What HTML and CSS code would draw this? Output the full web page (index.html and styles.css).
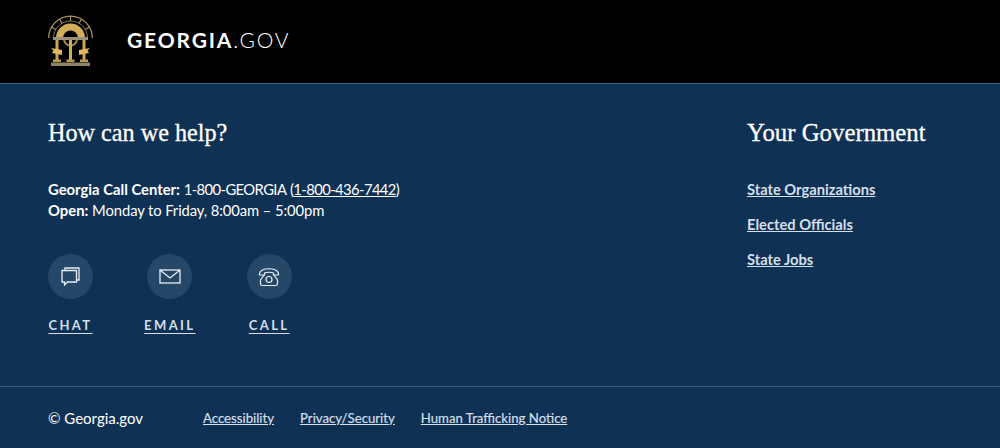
FILE: index.html
```html
<!DOCTYPE html>
<html lang="en">
<head>
<meta charset="UTF-8">
<meta name="viewport" content="width=device-width, initial-scale=1.0">
<title>Georgia.gov</title>
<link rel="stylesheet" href="styles.css">
</head>
<body>

<header class="site-header">
    <svg class="seal" width="45" height="52" viewBox="0 0 45 52" aria-hidden="true">
        <path d="M.7 23a21.800 21.800 0 0 1 43.600 0" fill="none" stroke="#a8935f" stroke-width="1.300"/>
        <path d="M5.500 23a17 17 0 0 1 34 0" fill="none" stroke="#7d6f4a" stroke-width="1"/>
        <path d="M22.500 1v5M11.500 4l2.500 4.500M33.500 4L31 8.500M3.500 12l4.500 2.500M41.500 12L37 14.500" stroke="#a8935f" stroke-width="1.200"/>
        <path d="M8 23a14.500 14.500 0 0 1 29 0h-7a7.500 7.500 0 0 0-15 0z" fill="#d3ae5a"/>
        <path d="M15 24a7.500 7.500 0 0 0 15 0l-2 0a5.500 5.500 0 0 1-11 0z" fill="#a88c48"/>
        <rect x="5" y="22" width="35" height="3" fill="#9a907c"/>
        <rect x="7.500" y="25" width="3" height="20" fill="#c9a552"/>
        <rect x="21" y="25" width="3" height="20" fill="#d3ae5a"/>
        <rect x="34.500" y="25" width="3" height="20" fill="#c9a552"/>
        <path d="M3 33l11 2v5l-10-2 1.500-2.500zM42 33l-11 2v5l10-2-1.500-2.500z" fill="#dcb865"/>
        <path d="M5 44.500h8V47H5zM18.500 44.500h8V47h-8zM32 44.500h8V47h-8z" fill="#b89a55"/>
        <rect x="3" y="47.500" width="39" height="3.500" fill="#8e8465"/>
    </svg>
    <a class="brand" href="#"><b>GEORGIA</b>.GOV</a>
</header>

<main class="help">
    <section>
        <h2 class="help-title">How can we help?</h2>
        <p class="hours">
            <strong>Georgia Call Center:</strong> <span class="num">1-800-GEORGIA (<a href="#">1-800-436-7442</a>)</span><br>
            <strong>Open:</strong> <span class="open-text">Monday to Friday, 8:00am – 5:00pm</span>
        </p>
        <div class="contact">
            <a class="contact-item" href="#">
                <span class="icon">
                    <svg width="19" height="19" viewBox="0 0 19 19" fill="none" stroke="#e8eef4" stroke-width="1.300">
                        <path d="M4 3.500V1h14v12h-2.500"/>
                        <path d="M1 3.500h14.500V15H6.500L3.500 18v-3H1z"/>
                    </svg>
                </span>
                <span class="label">CHAT</span>
            </a>
            <a class="contact-item" href="#">
                <span class="icon">
                    <svg width="22" height="15" viewBox="0 0 22 15" fill="none" stroke="#e8eef4" stroke-width="1.300">
                        <rect x="1" y="1" width="20" height="13"/>
                        <path d="M1 1l10 8 10-8"/>
                    </svg>
                </span>
                <span class="label">EMAIL</span>
            </a>
            <a class="contact-item" href="#">
                <span class="icon">
                    <svg width="22" height="20" viewBox="0 0 22 20" fill="none" stroke="#e8eef4" stroke-width="1.200">
                        <path d="M1.500 7c0-7 19-7 19 0v1h-5V6c-2-1-7-1-9 0v2h-5z"/>
                        <path d="M6.500 7.500L2.500 13v4c0 1 1 1.500 2 1.500h13c1 0 2-.5 2-1.500v-4l-4-5.500"/>
                        <circle cx="11" cy="12.500" r="3"/>
                    </svg>
                </span>
                <span class="label">CALL</span>
            </a>
        </div>
    </section>
    <section class="gov">
        <h2>Your Government</h2>
        <ul>
            <li><a href="#">State Organizations</a></li>
            <li><a href="#">Elected Officials</a></li>
            <li><a href="#">State Jobs</a></li>
        </ul>
    </section>
</main>

<footer class="site-footer">
    <span class="copy">© Georgia.gov</span>
    <a href="#">Accessibility</a>
    <a href="#">Privacy/Security</a>
    <a href="#">Human Trafficking Notice</a>
</footer>

</body>
</html>
```

FILE: styles.css
```css
body {
    font-family: "Lato", Arial, sans-serif;
    background-color: #0f3154;
    color: #fff;
    margin: 0;
    padding: 0;
    height: 448px;
    overflow: hidden;
    font-size: 14.8px;
}

a {
    color: #d5dfe9;
}

h2 {
    font-family: "Liberation Serif", serif;
    font-weight: 400;
    font-size: 24.8px;
    line-height: 32px;
    margin: 0;
    white-space: nowrap;
    -webkit-text-stroke: 0.3px #fff;
}

.help-title {
    font-size: 24.2px;
}

.site-header {
    display: flex;
    align-items: center;
    height: 83px;
    padding-left: 48px;
    background-color: #000;
    border-bottom: 1px solid #3a5d80;
    box-sizing: content-box;
}

.seal {
    margin: -1px 34px 0 0;
}

.brand {
    color: #fff;
    text-decoration: none;
    font-size: 21px;
    letter-spacing: 1.85px;
    font-weight: 300;
    margin-bottom: 4px;
}

.brand b {
    font-weight: 700;
}

.help {
    display: flex;
    justify-content: space-between;
    height: 303px;
    padding: 33px 74px 0 48px;
    box-sizing: border-box;
    border-bottom: 1px solid #3a5d80;
}

.hours {
    margin: 30px 0 0;
    line-height: 21px;
}

.hours a {
    color: #fff;
}

.num {
    letter-spacing: -0.6px;
    word-spacing: 1px;
}

.open-text {
    letter-spacing: -0.1px;
}

.contact {
    display: flex;
    gap: 54.3px;
    margin-top: 33px;
}

.contact-item {
    display: flex;
    flex-direction: column;
    align-items: center;
    width: 45px;
    text-decoration: none;
}

.icon {
    display: flex;
    align-items: center;
    justify-content: center;
    flex: none;
    width: 45px;
    height: 45px;
    border-radius: 50%;
    background-color: #254768;
}

.label {
    margin-top: 18px;
    font-size: 13px;
    font-weight: 700;
    letter-spacing: 2.4px;
    text-decoration: underline;
    text-underline-offset: 3px;
    color: #d5dfe9;
    white-space: nowrap;
}

.gov {
    width: 179px;
}

.gov ul {
    list-style: none;
    margin: 30px 0 0;
    padding: 0;
}

.gov li {
    margin-bottom: 14px;
    line-height: 21px;
    font-weight: 700;
    font-size: 14.7px;
}

.site-footer {
    display: flex;
    align-items: center;
    height: 61px;
    padding-left: 48px;
    font-size: 13.2px;
    gap: 26px;
}

.site-footer a {
    -webkit-text-stroke: 0.2px #d5dfe9;
}

.copy {
    font-size: 15px;
    margin-right: 34px;
}
```
